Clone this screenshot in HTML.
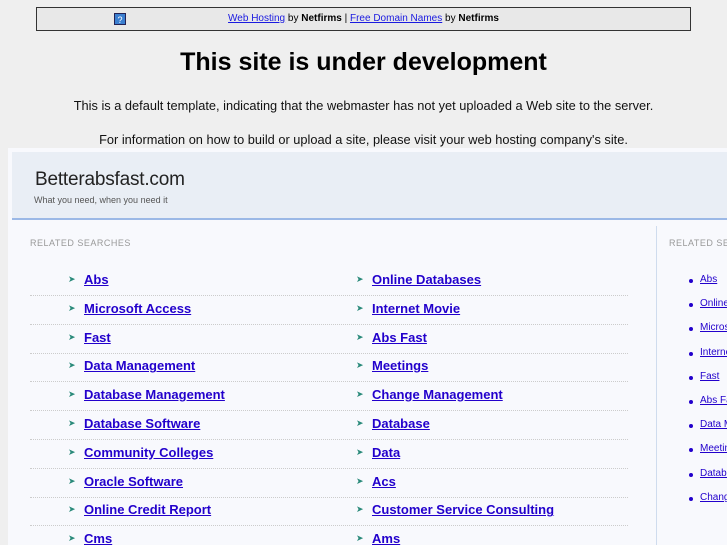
<!DOCTYPE html>
<html><head><meta charset="utf-8"><style>
*{margin:0;padding:0;box-sizing:border-box}
html,body{width:727px;height:545px;overflow:hidden}
body{background:#efefef;font-family:"Liberation Sans",sans-serif;position:relative}
.ban{position:absolute;left:36px;top:7px;width:655px;height:24px;border:1px solid #333;background:#e8e8e8;font-size:10px;text-align:center;line-height:21px;color:#000}
.ban a{color:#1a1ae0;text-decoration:underline}
.q{position:absolute;left:77px;top:5px;width:12px;height:12px;background:#3b7fd0;color:#fff;font-size:9px;line-height:12px;text-align:center;border:1px solid #225}
h1{position:absolute;top:48px;width:727px;text-align:center;font-size:25px;font-weight:bold;color:#000}
.p{position:absolute;width:727px;text-align:center;font-size:12.8px;color:#111;white-space:nowrap}
.frame{position:absolute;left:8px;top:148px;width:719px;height:397px;background:#f8f9fd;overflow:hidden}
.hd{position:absolute;left:4px;top:4px;width:715px;height:68px;background:#e9eef5;border-bottom:2px solid #9bb8e6}
.t{position:absolute;left:23px;top:17px;font-size:19px;color:#222;letter-spacing:-.2px}
.tg{position:absolute;left:22px;top:43px;font-size:9px;color:#555}
.lbl{position:absolute;font-size:9px;color:#999;letter-spacing:.5px;white-space:nowrap}
.it{position:absolute;font-size:13px;font-weight:bold;color:#2200cc;text-decoration:underline;white-space:nowrap}
.b{position:absolute;font-size:9px;color:#2a8a7a}
.sep{position:absolute;width:598px;border-top:1px dotted #ccc}
.vd{position:absolute;left:648px;top:78px;height:320px;border-left:1px solid #cfdcee}
.si{position:absolute;font-size:10px;color:#2200cc;text-decoration:underline;white-space:nowrap}
.sb{position:absolute;width:4px;height:4px;background:#2200cc;border-radius:50%}
#c{position:absolute;left:0;top:0;width:727px;height:545px;overflow:hidden}
</style></head><body>
<div class="ban"><span class="q">?</span><a>Web Hosting</a> by <b>Netfirms</b> | <a>Free Domain Names</a> by <b>Netfirms</b></div>
<h1>This site is under development</h1>
<div class="p" style="top:98px">This is a default template, indicating that the webmaster has not yet uploaded a Web site to the server.</div>
<div class="p" style="top:132px">For information on how to build or upload a site, please visit your web hosting company's site.</div>
<div class="frame">
<div class="hd"><div class="t">Betterabsfast.com</div><div class="tg">What you need, when you need it</div></div>
<div class="lbl" style="left:22px;top:90px">RELATED SEARCHES</div>
<div class="vd"></div>
<div class="lbl" style="left:661px;top:90px">RELATED SEARCHES</div>
</div>
<div id="c"></div>
<script>
var L=["Abs","Microsoft Access","Fast","Data Management","Database Management","Database Software","Community Colleges","Oracle Software","Online Credit Report","Cms"];
var R=["Online Databases","Internet Movie","Abs Fast","Meetings","Change Management","Database","Data","Acs","Customer Service Consulting","Ams"];
var S=["Abs","Online Databases","Microsoft Access","Internet Movie","Fast","Abs Fast","Data Management","Meetings","Database","Change Management"];
var h="";
for(var i=0;i<10;i++){var y=272+i*28.8;
h+='<span class="b" style="left:68px;top:'+(y+2)+'px">&#10148;</span><span class="it" style="left:84px;top:'+y+'px">'+L[i]+'</span>';
h+='<span class="b" style="left:356px;top:'+(y+2)+'px">&#10148;</span><span class="it" style="left:372px;top:'+y+'px">'+R[i]+'</span>';
if(i<9)h+='<div class="sep" style="left:30px;top:'+(y+23)+'px"></div>';
var sy=274+i*24.2;h+='<div class="sb" style="left:689px;top:'+(sy+5)+'px"></div><span class="si" style="left:700px;top:'+sy+'px">'+S[i]+'</span>';}
document.getElementById("c").innerHTML=h;
</script>
</body></html>
